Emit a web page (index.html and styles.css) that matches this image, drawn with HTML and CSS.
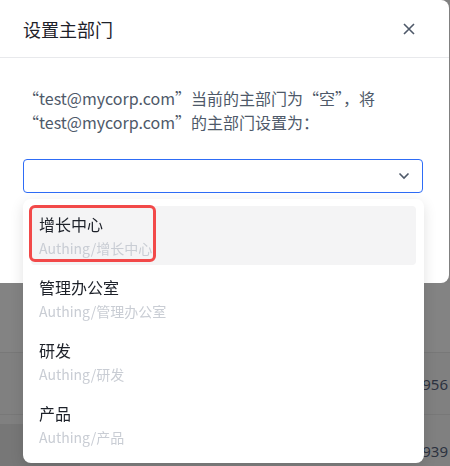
FILE: index.html
```html
<!DOCTYPE html>
<html lang="zh-CN">
<head>
<meta charset="utf-8">
<title>设置主部门</title>
<link rel="stylesheet" href="styles.css">
</head>
<body>
<div class="page">
  <div class="row row-top"></div>
  <div class="row"><span class="cell-num">956</span></div>
  <div class="row row-last"><span class="side-block"></span><span class="cell-num">939</span></div>
</div>

<div class="modal">
  <div class="modal-header">
    <span class="modal-title">设置主部门</span>
    <svg class="close-icon" width="12" height="12" viewBox="0 0 12 12"><path d="M1 1L11 11M11 1L1 11" stroke="#4e5969" stroke-width="1.6" fill="none"/></svg>
  </div>
  <div class="modal-body">
    <p class="desc">“test@mycorp.com”当前的主部门为“空”，将<br>“test@mycorp.com”的主部门设置为：</p>
    <div class="select">
      <svg class="chevron" width="12" height="8" viewBox="0 0 12 8"><path d="M1.5 1.5L6 6L10.5 1.5" stroke="#4e5969" stroke-width="1.6" fill="none"/></svg>
    </div>
  </div>

  <div class="dropdown">
    <div class="option active">
      <div class="opt-title">增长中心</div>
      <div class="opt-path">Authing/增长中心</div>
    </div>
    <div class="option">
      <div class="opt-title">管理办公室</div>
      <div class="opt-path">Authing/管理办公室</div>
    </div>
    <div class="option">
      <div class="opt-title">研发</div>
      <div class="opt-path">Authing/研发</div>
    </div>
    <div class="option">
      <div class="opt-title">产品</div>
      <div class="opt-path">Authing/产品</div>
    </div>
    <div class="highlight"></div>
  </div>
</div>
</body>
</html>
```

FILE: styles.css
```css
html, body {
  margin: 0;
  padding: 0;
}
body {
  width: 450px;
  height: 466px;
  overflow: hidden;
  background: #808080;
  font-family: "Noto Sans CJK SC", "Noto Sans", sans-serif;
}

.page {
  padding-top: 283px;
}
.row {
  height: 61px;
  border-bottom: 1px solid #787878;
  display: flex;
  align-items: center;
  justify-content: flex-end;
  position: relative;
  padding-right: 2px;
}
.row-top {
  height: 69px;
  background: #838383;
}
.row-last {
  height: 60px;
  align-items: flex-start;
}
.side-block {
  position: absolute;
  left: 0;
  top: 9px;
  width: 80px;
  height: 60px;
  background: #777777;
}
.cell-num {
  white-space: nowrap;
  font-family: "Noto Sans", sans-serif;
  font-size: 15px;
  line-height: 20px;
  color: #2d3340;
}
.row-last .cell-num {
  margin-top: 26px;
}

.modal {
  position: fixed;
  top: 0;
  left: 0;
  width: 449px;
  height: 283px;
  background: #ffffff;
  border-radius: 0 8px 8px 0;
}
.modal-header {
  height: 58px;
  box-sizing: border-box;
  padding: 0 34px 0 23px;
  display: flex;
  align-items: center;
  justify-content: space-between;
  border-bottom: 1px solid #e8e9ec;
}
.modal-title {
  font-size: 18px;
  line-height: 26px;
  color: #1d2129;
  margin-top: 1px;
}
.close-icon {
  display: block;
}
.modal-body {
  padding: 28px 26px 0 23px;
}
.desc {
  margin: 0 0 25px 0;
  font-size: 16px;
  line-height: 24px;
  color: #4e5969;
}
.select {
  height: 34px;
  box-sizing: border-box;
  border: 1px solid #2e6cf6;
  border-radius: 4px;
  display: flex;
  align-items: center;
  justify-content: flex-end;
  padding-right: 12px;
  width: 400px;
}
.chevron {
  display: block;
}

.dropdown {
  position: absolute;
  top: 199px;
  left: 23px;
  width: 401px;
  height: 264px;
  box-sizing: border-box;
  padding: 7px 8px;
  background: #ffffff;
  border-radius: 8px;
  box-shadow: 0 4px 14px rgba(0, 0, 0, 0.12);
  display: flex;
  flex-direction: column;
  gap: 4px;
}
.option {
  height: 59px;
  box-sizing: border-box;
  padding: 6px 8px 0 8px;
  border-radius: 4px;
}
.option.active {
  background: #f4f4f5;
}
.opt-title {
  font-size: 16px;
  line-height: 24px;
  color: #1d2129;
}
.opt-path {
  font-size: 14px;
  line-height: 22px;
  margin-top: 1px;
  color: #c9cdd4;
}
.highlight {
  position: absolute;
  left: 6px;
  top: 6px;
  width: 127px;
  height: 57px;
  box-sizing: border-box;
  border: 3px solid #f24949;
  border-radius: 6px;
}
```
